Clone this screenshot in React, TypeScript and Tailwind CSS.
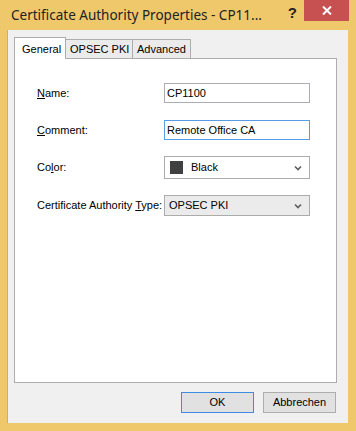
const ui = { fontFamily: '"Liberation Sans", Arial, sans-serif' };

function Field({ label, u, rest, children, h, mt }: { label: string; u: string; rest: string; children: React.ReactNode; h: string; mt: string }) {
  return (
    <div className={`flex items-center ${mt} ${h}`}>
      <div className="w-[149px] whitespace-nowrap pl-[22px] text-[11px] text-black">
        {label}
        <span className="underline underline-offset-1">{u}</span>
        {rest}
      </div>
      {children}
    </div>
  );
}

function Chevron() {
  return (
    <svg width="8" height="6" viewBox="0 0 8 6" className="mr-[7px] shrink-0">
      <path d="M1 1.5 L4 4.5 L7 1.5" stroke="#606060" strokeWidth="1.7" fill="none" />
    </svg>
  );
}

export default function App() {
  return (
    <div className="flex h-[431px] w-[356px] flex-col bg-[#f0c86c]" style={ui}>
      <div className="flex h-[30px] items-start">
        <div
          className="whitespace-nowrap pl-[11px] pt-[5px] text-[13.5px] text-[#222]"
          style={{ fontFamily: '"Noto Sans", "Open Sans", sans-serif' }}
        >
          Certificate Authority Properties - CP11...
        </div>
        <div className="ml-auto flex items-start">
          <div className="mr-[7px] pt-[2px] text-[15px] font-bold text-[#222]">?</div>
          <div className="mr-[7px] flex h-[21px] w-[45px] items-center justify-center bg-[#c75050]">
            <svg width="10" height="9" viewBox="0 0 10 9">
              <path d="M1 0.5 L9 8.5 M9 0.5 L1 8.5" stroke="#fff" strokeWidth="2" />
            </svg>
          </div>
        </div>
      </div>

      <div className="mb-[8px] ml-[7px] mr-[8px] flex flex-1 flex-col border-l border-[#d9ad52] bg-[#f0f0f0] pl-[6px] pr-[11px] pt-[7px]">
        <div className="flex h-[21px] items-end whitespace-nowrap text-[11px]">
          <div className="relative z-10 -mb-px flex h-[22px] w-[52px] items-start border border-b-0 border-[#adadad] bg-white pl-[7px] pt-[3px]">
            General
          </div>
          <div className="flex h-[19px] w-[67px] items-center border border-l-0 border-b-0 border-[#adadad] bg-[#ebebeb] pl-[4px]">
            OPSEC PKI
          </div>
          <div className="flex h-[19px] w-[58px] items-center border border-l-0 border-b-0 border-[#adadad] bg-[#ebebeb] pl-[4px]">
            Advanced
          </div>
        </div>

        <div className="flex h-[325px] flex-col border border-[#adadad] bg-white">
          <Field label="" u="N" rest="ame:" h="h-[20px]" mt="mt-[24px]">
            <div className="flex h-[20px] w-[146px] items-center border border-[#abadb3] pl-[2px] text-[11px]">CP1100</div>
          </Field>
          <Field label="" u="C" rest="omment:" h="h-[20px]" mt="mt-[17px]">
            <div className="flex h-[20px] w-[146px] items-center border border-[#569de5] pl-[2px] text-[11px]">Remote Office CA</div>
          </Field>
          <Field label="Co" u="l" rest="or:" h="h-[23px]" mt="mt-[16px]">
            <div className="flex h-[23px] w-[146px] items-center border border-[#acacac] bg-white text-[11px]">
              <div className="ml-[5px] mr-[8px] h-[13px] w-[13px] bg-[#404040]" />
              <span className="flex-1">Black</span>
              <Chevron />
            </div>
          </Field>
          <Field label="Certificate Authority " u="T" rest="ype:" h="h-[21px]" mt="mt-[16px]">
            <div className="flex h-[21px] w-[146px] items-center border border-[#acacac] bg-[#ebebeb] pl-[4px] text-[11px]">
              <span className="flex-1">OPSEC PKI</span>
              <Chevron />
            </div>
          </Field>
        </div>

        <div className="mt-[9px] flex justify-end gap-[9px] pr-[1px] text-[11px]">
          <button className="flex h-[21px] w-[73px] items-center justify-center border border-[#3c8ce6] bg-[#e1e1e1]">OK</button>
          <button className="flex h-[21px] w-[73px] items-center justify-center border border-[#adadad] bg-[#e1e1e1]">Abbrechen</button>
        </div>
      </div>
    </div>
  );
}
